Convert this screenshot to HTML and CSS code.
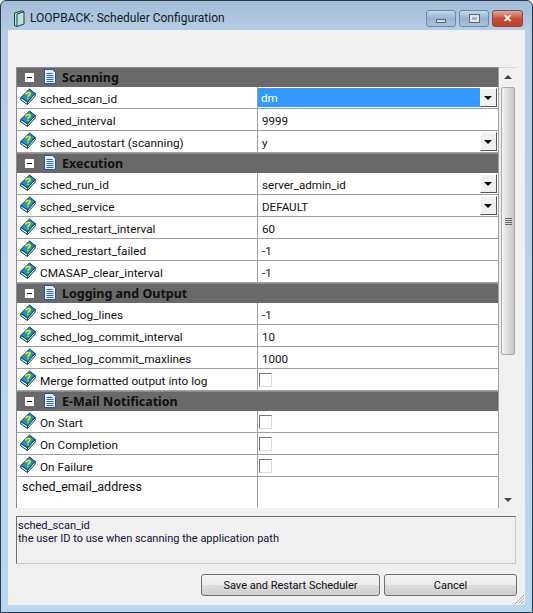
FILE: index.html
```html
<!DOCTYPE html>
<html lang="en">
<head>
    <meta charset="UTF-8">
    <title>LOOPBACK: Scheduler Configuration</title>
    <link rel="stylesheet" href="styles.css">
</head>
<body>
    <svg class="defs" width="0" height="0">
        <symbol id="book" viewBox="0 0 16 17">
            <path d="M.8 9.500 9.500 1l5.700 4.500-7.700 8.500z" fill="#1a93c6" stroke="#0a3a5a"/>
            <path d="M.8 9.500v2.500l6.700 4.500 7.700-8.500V5.500L7.500 14z" fill="#eef2ee" stroke="#0a3a4a"/>
            <path d="M7.500 16.500v-2.500L15.200 5.500" fill="none" stroke="#0b5a3a"/>
            <path d="M5.500 6.500c1-2.500 4.500-2.500 4.500-.8C10 7 8 7.200 7.800 8.800M7.400 10.500h1.200" fill="none" stroke="#ffe81a" stroke-width="1.500"/>
        </symbol>
        <symbol id="doc" viewBox="0 0 12 15">
            <path d="M.5.500h8l3 3v11H.5z" fill="#e8f0ff" stroke="#2450b8"/>
            <path d="M2.500 4.500h6M2.500 6.500h7M2.500 8.500h7M2.500 10.500h7M2.500 12.500h7" stroke="#2f62c8"/>
        </symbol>
    </svg>

    <div class="window">
        <div class="titlebar">
            <svg class="app-icon" width="12" height="17" viewBox="0 0 12 17">
                <path d="M1.500 3 9 .8l2 1V14l-7 2.500-2.500-1z" fill="#bfe3e0" stroke="#17413f"/>
                <path d="M4 4v12M4 4l7-2.200" fill="none" stroke="#17413f"/>
            </svg>
            <span class="title">LOOPBACK: Scheduler Configuration</span>
            <div class="caption-btns">
                <div class="cap-btn"><span class="min-glyph"></span></div>
                <div class="cap-btn"><span class="max-glyph"></span></div>
                <div class="cap-btn close"><span class="close-glyph">✕</span></div>
            </div>
        </div>

        <div class="client">
            <div class="grid-wrap">
                <div class="grid">
                    <div class="section">
                        <span class="toggle"></span>
                        <svg class="doc-icon"><use href="#doc"/></svg>
                        <span>Scanning</span>
                    </div>
                    <div class="row">
                        <div class="name"><svg class="book"><use href="#book"/></svg>sched_scan_id</div>
                        <div class="value selected-cell"><span class="selected">dm</span><span class="combo"></span></div>
                    </div>
                    <div class="row">
                        <div class="name"><svg class="book"><use href="#book"/></svg>sched_interval</div>
                        <div class="value">9999</div>
                    </div>
                    <div class="row">
                        <div class="name"><svg class="book"><use href="#book"/></svg>sched_autostart (scanning)</div>
                        <div class="value">y<span class="combo"></span></div>
                    </div>

                    <div class="section">
                        <span class="toggle"></span>
                        <svg class="doc-icon"><use href="#doc"/></svg>
                        <span>Execution</span>
                    </div>
                    <div class="row">
                        <div class="name"><svg class="book"><use href="#book"/></svg>sched_run_id</div>
                        <div class="value">server_admin_id<span class="combo"></span></div>
                    </div>
                    <div class="row">
                        <div class="name"><svg class="book"><use href="#book"/></svg>sched_service</div>
                        <div class="value">DEFAULT<span class="combo"></span></div>
                    </div>
                    <div class="row">
                        <div class="name"><svg class="book"><use href="#book"/></svg>sched_restart_interval</div>
                        <div class="value">60</div>
                    </div>
                    <div class="row">
                        <div class="name"><svg class="book"><use href="#book"/></svg>sched_restart_failed</div>
                        <div class="value">-1</div>
                    </div>
                    <div class="row">
                        <div class="name"><svg class="book"><use href="#book"/></svg>CMASAP_clear_interval</div>
                        <div class="value">-1</div>
                    </div>

                    <div class="section">
                        <span class="toggle"></span>
                        <svg class="doc-icon"><use href="#doc"/></svg>
                        <span>Logging and Output</span>
                    </div>
                    <div class="row">
                        <div class="name"><svg class="book"><use href="#book"/></svg>sched_log_lines</div>
                        <div class="value">-1</div>
                    </div>
                    <div class="row">
                        <div class="name"><svg class="book"><use href="#book"/></svg>sched_log_commit_interval</div>
                        <div class="value">10</div>
                    </div>
                    <div class="row">
                        <div class="name"><svg class="book"><use href="#book"/></svg>sched_log_commit_maxlines</div>
                        <div class="value">1000</div>
                    </div>
                    <div class="row">
                        <div class="name"><svg class="book"><use href="#book"/></svg>Merge formatted output into log</div>
                        <div class="value"><span class="check"></span></div>
                    </div>

                    <div class="section">
                        <span class="toggle"></span>
                        <svg class="doc-icon"><use href="#doc"/></svg>
                        <span>E-Mail Notification</span>
                    </div>
                    <div class="row">
                        <div class="name"><svg class="book"><use href="#book"/></svg>On Start</div>
                        <div class="value"><span class="check"></span></div>
                    </div>
                    <div class="row">
                        <div class="name"><svg class="book"><use href="#book"/></svg>On Completion</div>
                        <div class="value"><span class="check"></span></div>
                    </div>
                    <div class="row">
                        <div class="name"><svg class="book"><use href="#book"/></svg>On Failure</div>
                        <div class="value"><span class="check"></span></div>
                    </div>
                    <div class="row last">
                        <div class="name">sched_email_address</div>
                        <div class="value"></div>
                    </div>
                </div>

                <div class="scrollbar">
                    <span class="arrow-up"></span>
                    <div class="thumb"><span class="grip"></span></div>
                    <span class="arrow-down"></span>
                </div>
            </div>

            <div class="description">
                <div>sched_scan_id</div>
                <div>the user ID to use when scanning the application path</div>
            </div>

            <div class="buttons">
                <button class="btn save">Save and Restart Scheduler</button>
                <button class="btn cancel">Cancel</button>
            </div>
            <svg class="resize-grip" width="12" height="12" viewBox="0 0 12 12">
                <path d="M11 2 2 11M11 5 5 11M11 8 8 11" stroke="#a9a9a9" fill="none"/>
            </svg>
        </div>
    </div>
</body>
</html>
```

FILE: styles.css
```css
* {
    margin: 0;
    padding: 0;
    box-sizing: border-box;
}

html, body {
    height: 100%;
    overflow: hidden;
}

body {
    font-family: Roboto, "Noto Sans", sans-serif;
    font-size: 12px;
    color: #111;
    background-color: #fff;
}

.defs {
    display: block;
    height: 0;
}

.window {
    width: 533px;
    height: 613px;
    display: flex;
    flex-direction: column;
    padding: 0 7px 7px;
    border: 1px solid #2a3a44;
    border-radius: 6px 6px 0 0;
    background: linear-gradient(to bottom, #a3bcd8 0, #b5cde5 30px, #b9d7f2 100%);
}

.titlebar {
    height: 29px;
    flex: none;
    display: flex;
    align-items: center;
    padding: 5px 2px 0 5px;
}

.app-icon {
    margin-right: 5px;
}

.title {
    font-size: 12px;
    color: #0f1a24;
}

.caption-btns {
    margin-left: auto;
    align-self: flex-start;
    margin-top: 4px;
    display: flex;
    gap: 3px;
}

.cap-btn {
    width: 30px;
    height: 17px;
    display: flex;
    align-items: center;
    justify-content: center;
    border: 1px solid #6f8aa6;
    border-radius: 3px;
    background: linear-gradient(to bottom, #c6d8ea, #98b3d0 50%, #a9c3dc);
}

.cap-btn.close {
    width: 31px;
    border-color: #8a4a3e;
    background: linear-gradient(to bottom, #e3a898, #c8503a 50%, #b8452f);
}

.min-glyph {
    width: 10px;
    height: 4px;
    margin-top: 5px;
    background-color: #d8d8d8;
    border: 1px solid #5a6a7a;
}

.max-glyph {
    width: 11px;
    height: 9px;
    border: 3px solid #e4e4e4;
    outline: 1px solid #5a6a7a;
    outline-offset: -1px;
}

.close-glyph {
    color: #fff;
    font-size: 11px;
    font-weight: bold;
    line-height: 1;
}

.client {
    flex: 1;
    position: relative;
    display: flex;
    flex-direction: column;
    padding: 37px 8px 0;
    background-color: #f0f0f0;
}

.grid-wrap {
    height: 441px;
    flex: none;
    display: flex;
    background-color: #fff;
    overflow: hidden;
}

.grid {
    flex: 1;
    border-left: 1px solid #8c8c8c;
    border-right: 1px solid #a0a0a0;
}

.section {
    height: 20px;
    display: flex;
    align-items: center;
    background-color: #696969;
    border-top: 1px solid #8c8c8c;
    font-family: "Noto Sans", sans-serif;
    font-weight: bold;
    font-size: 12.500px;
    color: #101010;
    padding-left: 8px;
}

.toggle {
    position: relative;
    width: 9px;
    height: 9px;
    background-color: #fff;
    margin-right: 10px;
}

.toggle::after {
    content: "";
    position: absolute;
    left: 2px;
    top: 4px;
    width: 5px;
    height: 1px;
    background-color: #111;
}

.doc-icon {
    width: 12px;
    height: 15px;
    margin-right: 6px;
    margin-top: -3px;
}

.row {
    height: 22px;
    display: grid;
    grid-template-columns: 241px 1fr;
    border-bottom: 1px solid #a0a0a0;
}

.row.last {
    height: 31px;
    border-bottom: none;
}

.name {
    display: flex;
    align-items: center;
    padding: 2px 0 0 3px;
    border-right: 1px solid #a0a0a0;
    white-space: nowrap;
    font-size: 11.800px;
}

.row.last .name {
    align-items: flex-start;
    padding-left: 5px;
    padding-top: 2px;
    font-size: 12.500px;
}

.book {
    width: 16px;
    height: 17px;
    margin-right: 4px;
    margin-top: -4px;
    flex: none;
}

.value {
    position: relative;
    display: flex;
    align-items: center;
    padding: 2px 0 0 4px;
    white-space: nowrap;
    font-size: 11.600px;
}

.selected-cell {
    padding: 1px 18px 1px 0;
}

.selected {
    flex: 1;
    align-self: stretch;
    display: flex;
    align-items: center;
    padding: 1px 0 0 3px;
    background-color: #3399ff;
    color: #fff;
}

.combo {
    position: absolute;
    top: 1px;
    right: 1px;
    bottom: 1px;
    width: 17px;
    background-color: #f0f0f0;
    border-right: 1px solid #555;
    border-bottom: 1px solid #555;
    border-top: 1px solid #fff;
    border-left: 1px solid #fff;
}

.combo::after {
    content: "";
    position: absolute;
    left: 3px;
    top: 7px;
    border-left: 4px solid transparent;
    border-right: 4px solid transparent;
    border-top: 4px solid #000;
}

.check {
    width: 13px;
    height: 14px;
    margin: -2px 0 0 -3px;
    background-color: #fff;
    border: 1px solid #dcdcdc;
    border-top-color: #777;
    border-left-color: #777;
}

.scrollbar {
    position: relative;
    width: 18px;
    flex: none;
    background-color: #f0f0f0;
    border-top: 1px solid #d8d8d8;
}

.arrow-up, .arrow-down {
    position: absolute;
    left: 5px;
    border-left: 4px solid transparent;
    border-right: 4px solid transparent;
}

.arrow-up {
    top: 7px;
    border-bottom: 4px solid #444;
}

.arrow-down {
    bottom: 6px;
    border-top: 4px solid #444;
}

.thumb {
    position: absolute;
    top: 19px;
    left: 2px;
    right: 2px;
    height: 268px;
    display: flex;
    align-items: center;
    justify-content: center;
    border: 1px solid #a8a8a8;
    border-radius: 2px;
    background: linear-gradient(to right, #f4f4f4, #dcdcdc 50%, #c8c8c8);
}

.grip {
    width: 7px;
    height: 7px;
    background: repeating-linear-gradient(to bottom, #666 0, #666 1px, transparent 1px, transparent 2px);
}

.description {
    height: 48px;
    flex: none;
    margin-top: 8px;
    margin-right: 1px;
    padding: 2px 0 0 1px;
    font-size: 11px;
    line-height: 13px;
    border: 1px solid #c8c8c8;
    border-top-color: #6d6d6d;
    border-left-color: #6d6d6d;
    color: #101040;
}

.buttons {
    display: flex;
    justify-content: flex-end;
    gap: 4px;
    margin-top: 10px;
}

.btn {
    height: 22px;
    font-family: inherit;
    font-size: 11px;
    color: #111;
    border: 1px solid #707070;
    border-radius: 3px;
    background: linear-gradient(to bottom, #f2f2f2, #ebebeb 50%, #dddddd 50%, #cfcfcf);
}

.btn.save {
    width: 179px;
}

.btn.cancel {
    width: 133px;
}

.resize-grip {
    position: absolute;
    right: 0;
    bottom: 0;
}
```
